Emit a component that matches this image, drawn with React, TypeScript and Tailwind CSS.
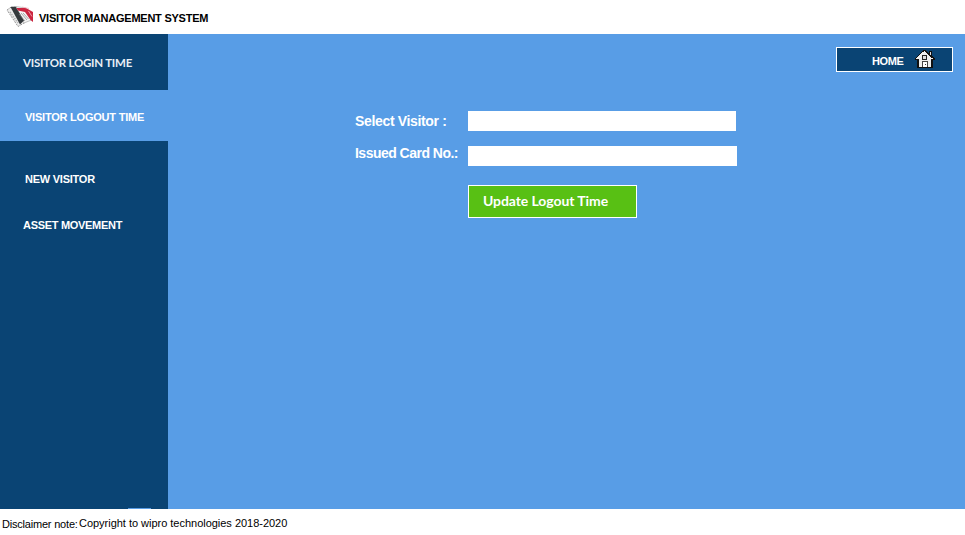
function LogoIcon() {
  return (
    <svg className="h-6 w-7 shrink-0" viewBox="0 0 28 24" fill="none">
      <path d="M1 6 L6 2.500 L19 18.500 L12 22.500 Z" fill="#ededed" stroke="#999" strokeWidth="1" strokeDasharray="2 1" />
      <path d="M4 8 L12 19" stroke="#b5b5b5" strokeWidth="1.500" strokeDasharray="1.500 1" />
      <path d="M10 2.500 L20 4 L25.500 16 L18 19 Z" fill="#f4f4f4" stroke="#aaa" strokeWidth=".7" />
      <path d="M4.500 3 L9.500 2.500 L18 16.500 L14 20.500 Z" fill="#34393c" />
      <path d="M13 10 L19 17 M15 9 L21 16 M17 9 L22.500 15" stroke="#888" strokeWidth=".7" />
      <path d="M10.500 4 L20 4 L27 8 V18 L24.500 16 L19 8 L12 6.500 Z" fill="#cb2540" />
      <path d="M16 3 L23 4.500 M22.500 7 L26 12.500" stroke="#f2b8c0" strokeWidth=".8" />
    </svg>
  );
}

function HomeIcon() {
  return (
    <svg className="mt-0.5 h-[19px] w-5 shrink-0" viewBox="0 0 20 19" shapeRendering="crispEdges">
      <path d="M8 0h3v1h1v1h1v1h1V1h3v5h1v1h1v1h1v2h-2v8H2v-8H0V8h1V7h1V6h1V5h1V4h1V3h1V2h1V1h1z" fill="#111" />
      <path d="M9 1h1v1h1v1h1v1h1v1h1v1h1v1h1v1h2v1h-2v8H4V9H1V8h1V7h1V6h1V5h1V4h1V3h1V2h2z" fill="#efefef" />
      <path d="M15 2h1v3h-1z" fill="#ddd" />
      <path d="M7 5h5v5H7z" fill="#222" />
      <path d="M8 6h3v3H8z" fill="#ddd" />
      <path d="M7 11h6v6H7z" fill="#444" />
      <path d="M8 12h4v5H8z" fill="#fff" />
      <path d="M10 14h1v1h-1z" fill="#333" />
    </svg>
  );
}

export default function App() {
  return (
    <div className="flex h-[535px] w-[965px] flex-col overflow-hidden whitespace-nowrap bg-white font-['Liberation_Sans',Arial,sans-serif]">
      <header className="flex h-[34px] shrink-0 pl-1.5 pt-1">
        <LogoIcon />
        <h1 className="ml-[5px] mt-1.5 text-[11px] font-bold leading-4 tracking-[-0.24px] text-black">VISITOR MANAGEMENT SYSTEM</h1>
      </header>
      <div className="flex h-[475px] shrink-0">
        <nav className="flex w-[168px] shrink-0 flex-col bg-[#0a4474] text-[11px] font-bold leading-4 text-white">
          <a className="h-14 pl-[23px] pt-[21px] font-['Lato',sans-serif] text-[11.5px] tracking-[-0.22px] text-[#e8eef4]">VISITOR LOGIN TIME</a>
          <a className="h-[51px] bg-[#589de6] pl-[25px] pt-[19px] tracking-[-0.22px]">VISITOR LOGOUT TIME</a>
          <a className="h-[46px] pl-[25px] pt-[30px] tracking-[-0.24px]">NEW VISITOR</a>
          <a className="pl-[23px] pt-[30px] tracking-[-0.3px]">ASSET MOVEMENT</a>
          <div className="ml-32 mt-auto h-px w-[23px] bg-[#589de6]" />
        </nav>
        <main className="flex grow justify-between bg-[#589de6] pl-[187px] pr-3 text-white">
          <form className="grid grid-cols-[113px_269px] grid-rows-[35px_39px_33px] content-start items-start pt-[77px] text-[14px] font-bold leading-4">
            <label className="pt-0.5 tracking-[-0.34px]">Select Visitor :</label>
            <input className="h-5 w-[268px] bg-white" />
            <label className="-mt-px tracking-[-0.52px]">Issued Card No.:</label>
            <input className="h-5 w-[269px] bg-white" />
            <button type="button" className="col-start-2 h-[33px] w-[169px] border border-white bg-[#58c014] pb-0.5 pl-3.5 text-left font-['Lato',sans-serif] text-[14px] leading-4 tracking-[-0.08px]">Update Logout Time</button>
          </form>
          <button className="mt-[13px] flex h-[25px] w-[117px] items-start border border-white bg-[#0a4474] pl-[35px] text-[11px] font-bold leading-4">
            <span className="mt-[5px] w-[43px] text-left tracking-[-0.4px]">HOME</span>
            <HomeIcon />
          </button>
        </main>
      </div>
      <footer className="flex pl-0.5 pt-1.5 text-[11px] leading-4 text-black">
        <span className="w-[77px] pt-px tracking-[-0.2px]">Disclaimer note:</span>
        <span className="tracking-[-0.02px]">Copyright to wipro technologies 2018-2020</span>
      </footer>
    </div>
  );
}
